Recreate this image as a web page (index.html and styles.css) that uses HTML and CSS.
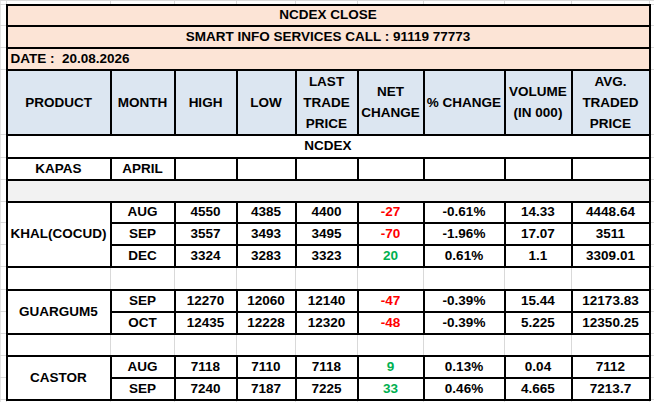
FILE: index.html
```html
<!DOCTYPE html>
<html>
<head>
<meta charset="utf-8">
<link rel="stylesheet" href="styles.css">
</head>
<body>
<div class="sheet">
<table class="grid">
  <colgroup>
    <col class="c0"><col class="c1"><col class="c2"><col class="c3"><col class="c4"><col class="c5"><col class="c6"><col class="c7"><col class="c8"><col class="c9"><col class="c10">
  </colgroup>
  <tr class="rtop"><td class="gut"></td><td class="gut"></td><td class="gut"></td><td class="gut"></td><td class="gut"></td><td class="gut"></td><td class="gut"></td><td class="gut"></td><td class="gut"></td><td class="gut"></td><td class="gut"></td></tr>
  <tr class="r21"><td class="gut"></td><td class="peach" colspan="9">NCDEX CLOSE</td><td class="gut"></td></tr>
  <tr class="r22"><td class="gut"></td><td class="peach" colspan="9">SMART INFO SERVICES CALL : 91119 77773</td><td class="gut"></td></tr>
  <tr class="r22"><td class="gut"></td><td class="peach left" colspan="9">DATE :&nbsp; 20.08.2026</td><td class="gut"></td></tr>
  <tr class="rhead">
    <td class="gut"></td>
    <td class="blue">PRODUCT</td>
    <td class="blue">MONTH</td>
    <td class="blue">HIGH</td>
    <td class="blue">LOW</td>
    <td class="blue">LAST<br>TRADE<br>PRICE</td>
    <td class="blue">NET<br>CHANGE</td>
    <td class="blue">% CHANGE</td>
    <td class="blue">VOLUME<br>(IN 000)</td>
    <td class="blue">AVG.<br>TRADED<br>PRICE</td>
    <td class="gut"></td>
  </tr>
  <tr class="r23"><td class="gut"></td><td colspan="9">NCDEX</td><td class="gut"></td></tr>
  <tr class="r22"><td class="gut"></td><td>KAPAS</td><td>APRIL</td><td></td><td></td><td></td><td></td><td></td><td></td><td></td><td class="gut"></td></tr>
  <tr class="r22"><td class="gut"></td><td class="gray" colspan="9"></td><td class="gut"></td></tr>
  <tr class="r21"><td class="gut"></td><td rowspan="3">KHAL(COCUD)</td><td>AUG</td><td>4550</td><td>4385</td><td>4400</td><td class="red">-27</td><td>-0.61%</td><td>14.33</td><td>4448.64</td><td class="gut"></td></tr>
  <tr class="r22"><td class="gut"></td><td>SEP</td><td>3557</td><td>3493</td><td>3495</td><td class="red">-70</td><td>-1.96%</td><td>17.07</td><td>3511</td><td class="gut"></td></tr>
  <tr class="r22"><td class="gut"></td><td>DEC</td><td>3324</td><td>3283</td><td>3323</td><td class="green">20</td><td>0.61%</td><td>1.1</td><td>3309.01</td><td class="gut"></td></tr>
  <tr class="r23 spacer"><td class="gut"></td><td class="gl first"></td><td class="gl"></td><td class="gl"></td><td class="gl"></td><td class="gl"></td><td class="gl"></td><td class="gl"></td><td class="gl"></td><td class="gl last"></td><td class="gut"></td></tr>
  <tr class="r22"><td class="gut"></td><td rowspan="2">GUARGUM5</td><td>SEP</td><td>12270</td><td>12060</td><td>12140</td><td class="red">-47</td><td>-0.39%</td><td>15.44</td><td>12173.83</td><td class="gut"></td></tr>
  <tr class="r22"><td class="gut"></td><td>OCT</td><td>12435</td><td>12228</td><td>12320</td><td class="red">-48</td><td>-0.39%</td><td>5.225</td><td>12350.25</td><td class="gut"></td></tr>
  <tr class="r22 spacer"><td class="gut"></td><td class="gl first"></td><td class="gl"></td><td class="gl"></td><td class="gl"></td><td class="gl"></td><td class="gl"></td><td class="gl"></td><td class="gl"></td><td class="gl last"></td><td class="gut"></td></tr>
  <tr class="r22"><td class="gut"></td><td rowspan="2">CASTOR</td><td>AUG</td><td>7118</td><td>7110</td><td>7118</td><td class="green">9</td><td>0.13%</td><td>0.04</td><td>7112</td><td class="gut"></td></tr>
  <tr class="r22"><td class="gut"></td><td>SEP</td><td>7240</td><td>7187</td><td>7225</td><td class="green">33</td><td>0.46%</td><td>4.665</td><td>7213.7</td><td class="gut"></td></tr>
  <tr class="rbot"><td class="gut"></td><td class="gut"></td><td class="gut"></td><td class="gut"></td><td class="gut"></td><td class="gut"></td><td class="gut"></td><td class="gut"></td><td class="gut"></td><td class="gut"></td><td class="gut"></td></tr>
</table>
</div>
</body>
</html>
```
FILE: styles.css
```css
html, body {
  margin: 0;
  padding: 0;
  background: #ffffff;
  overflow: hidden;
}
.sheet {
  width: 654px;
  height: 402px;
  overflow: hidden;
}
.grid {
  border-collapse: collapse;
  table-layout: fixed;
  width: 660px;
  font-family: "Liberation Sans", Arial, sans-serif;
  font-weight: bold;
  font-size: 13.5px;
  color: #000000;
}
.c0 { width: 6px; }
.c1 { width: 104px; }
.c2 { width: 64px; }
.c3 { width: 62px; }
.c4 { width: 59px; }
.c5 { width: 62px; }
.c6 { width: 66px; }
.c7 { width: 81px; }
.c8 { width: 67px; }
.c9 { width: 78px; }
.c10 { width: 11px; }
.grid td {
  border: 2px solid #000000;
  padding: 0;
  text-align: center;
  vertical-align: middle;
  line-height: 16px;
  white-space: nowrap;
  overflow: hidden;
}
.grid td.gut {
  border: 1px solid #dadada;
  border-left-color: #e4e4e4;
}
.rtop { height: 4px; }
.rbot { height: 10px; }
.r21 { height: 21px; }
.r22 { height: 22px; }
.r23 { height: 23px; }
.rhead { height: 63px; }
.rhead td { line-height: 21px; }
.peach { background: #fce4d6; }
.blue { background: #dce6f1; }
.gray { background: #f2f2f2; }
.grid td.left { text-align: left; padding-left: 3px; }
.red { color: #ff0000; }
.green { color: #00b050; }
.grid .spacer td.gl {
  border-top: 2px solid #000000;
  border-bottom: 2px solid #000000;
  border-left: 1px solid #d9d9d9;
  border-right: 1px solid #d9d9d9;
}
.grid .spacer td.gl.first { border-left: 2px solid #000000; }
.grid .spacer td.gl.last { border-right: 2px solid #000000; }
```
